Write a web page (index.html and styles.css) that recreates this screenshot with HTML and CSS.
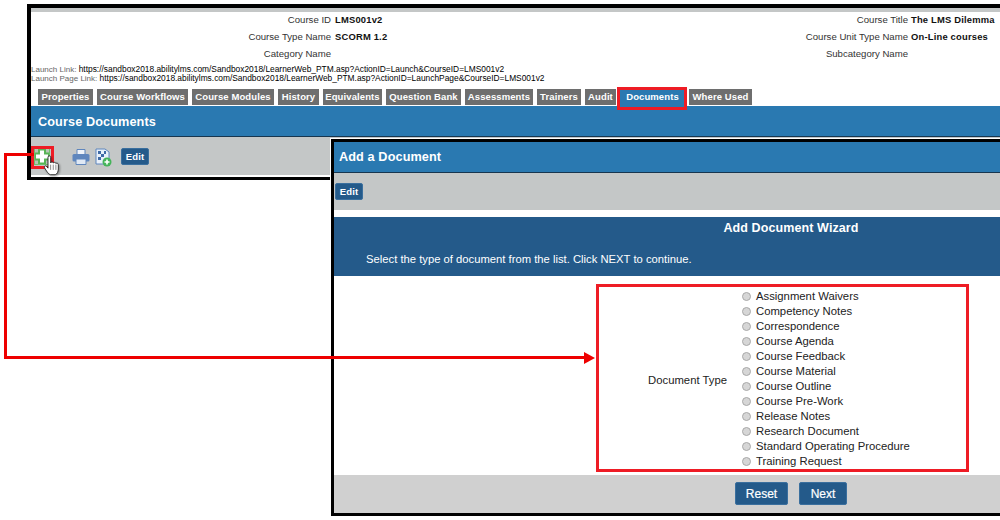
FILE: index.html
```html
<!DOCTYPE html>
<html lang="en">
<head>
<meta charset="utf-8">
<title>Course Documents</title>
<link rel="stylesheet" href="styles.css">
</head>
<body>
<div class="canvas">
  <section class="shot course">
    <div class="strip"></div>
    <div class="meta">
      <div class="meta-row"><div class="pair p1"><span>Course ID</span><b>LMS001v2</b></div><div class="pair p2"><span>Course Title</span><b>The LMS Dilemma</b></div></div>
      <div class="meta-row"><div class="pair p1"><span>Course Type Name</span><b>SCORM 1.2</b></div><div class="pair p2"><span>Course Unit Type Name</span><b>On-Line courses</b></div></div>
      <div class="meta-row"><div class="pair p1"><span>Category Name</span></div><div class="pair p2"><span>Subcategory Name</span></div></div>
    </div>
    <div class="links">
      <div><span>Launch Link:</span> https://sandbox2018.abilitylms.com/Sandbox2018/LearnerWeb_PTM.asp?ActionID=Launch&amp;CourseID=LMS001v2</div>
      <div><span>Launch Page Link:</span> https://sandbox2018.abilitylms.com/Sandbox2018/LearnerWeb_PTM.asp?ActionID=LaunchPage&amp;CourseID=LMS001v2</div>
    </div>
    <nav class="tabs">
      <a class="tab">Properties</a><a class="tab">Course Workflows</a><a class="tab">Course Modules</a><a class="tab">History</a><a class="tab">Equivalents</a><a class="tab">Question Bank</a><a class="tab">Assessments</a><a class="tab">Trainers</a><a class="tab">Audit</a><a class="tab active">Documents</a><a class="tab">Where Used</a>
    </nav>
    <h1 class="bar course-bar">Course Documents</h1>
    <div class="toolbar">
      <svg class="ico add" width="16" height="17" viewBox="0 0 16 17"><rect x=".5" y=".5" width="15" height="16" fill="#b7c4b5" stroke="#6fbf6a"/><path d="M8 1v15M1 8.500h14" stroke="#58b456" stroke-width="8"/><path d="M8 2.500v12M2 8.500h12" stroke="#fff" stroke-width="4"/></svg>
      <svg class="ico print" width="18" height="18" viewBox="0 0 18 18"><path d="M5 1.500h8v5H5z" fill="#eef3fa" stroke="#5f86bd"/><rect x=".5" y="6" width="17" height="7.500" rx="1.500" fill="#5f86bd"/><path d="M4 11h10v5.500H4z" fill="#dfe8f4" stroke="#5f86bd"/></svg>
      <svg class="ico doc" width="17" height="19" viewBox="0 0 17 19"><path d="M1 1h9l4 3v12H1z" fill="#e9f0f9" stroke="#5f86bd"/><path d="M3 3h3v3H3zM6 6h3v3H6zM3 9h3v3H3zM9 3h2v3H9z" fill="#3f6aa6"/><circle cx="12" cy="14" r="4.500" fill="#45b45a"/><path d="M12 11.500v5M9.500 14h5" stroke="#fff" stroke-width="1.600"/></svg>
      <button class="btn small">Edit</button>
    </div>
  </section>

  <section class="shot wizard">
    <h2 class="bar wizard-bar">Add a Document</h2>
    <div class="edit-row"><button class="btn small">Edit</button></div>
    <div class="wizard-head">
      <div class="wizard-title">Add Document Wizard</div>
      <p class="wizard-hint">Select the type of document from the list. Click NEXT to continue.</p>
    </div>
    <div class="form">
      <div class="field-label">Document Type</div>
      <ul class="options">
        <li><i></i>Assignment Waivers</li>
        <li><i></i>Competency Notes</li>
        <li><i></i>Correspondence</li>
        <li><i></i>Course Agenda</li>
        <li><i></i>Course Feedback</li>
        <li><i></i>Course Material</li>
        <li><i></i>Course Outline</li>
        <li><i></i>Course Pre-Work</li>
        <li><i></i>Release Notes</li>
        <li><i></i>Research Document</li>
        <li><i></i>Standard Operating Procedure</li>
        <li><i></i>Training Request</li>
      </ul>
    </div>
    <div class="actions"><button class="btn big reset">Reset</button><button class="btn big next">Next</button></div>
  </section>

  <div class="mark mark-add"></div>
  <div class="mark mark-tab"></div>
  <div class="mark mark-form"></div>
  <div class="line line-a"></div>
  <div class="line line-b"></div>
  <div class="line line-c"></div>
  <div class="arrowhead"></div>
  <svg class="cursor" width="17" height="21" viewBox="0 0 18 24"><path d="M5 2.500c0-2 3-2 3 0V9c.500-1.500 3-1.500 3 .200.500-1.200 3-1 3 .500.800-.800 2.800-.300 2.800 1.300V16c0 3-1.500 6-3.500 6.500H7.500C5.500 22 3 18 1 14.500c-.800-1.500 1-3 2.300-1.500L5 15z" fill="#fff" stroke="#222" stroke-width="1"/><path d="M8 11v6M11 11v6M14 11v6" stroke="#444" stroke-width=".700"/></svg>
</div>
</body>
</html>
```

FILE: styles.css
```css
* { box-sizing: border-box; }
html, body { margin: 0; padding: 0; background: #fff; }
body { font-family: "Liberation Sans", Arial, sans-serif; color: #222; }
.canvas { position: relative; width: 1000px; height: 520px; overflow: hidden; }

.shot { position: absolute; background: #fff; border: solid #000; border-right: 0; }
.course { left: 27px; top: 4px; width: 973px; height: 176px; border-width: 4px 0 3px 4px; }
.strip { height: 4px; background: #c4c7c7; }

.meta { height: 50px; }
.meta-row { display: flex; height: 17px; line-height: 16px; }
.pair { position: relative; white-space: nowrap; }
.pair span { display: block; text-align: right; font-size: 9.600px; color: #333; }
.pair b { position: absolute; top: 0; font-size: 9.400px; color: #111; letter-spacing: .2px; }
.p1 { width: 331px; }
.p1 span { width: 300px; }
.p1 b { left: 304px; }
.p2 { width: 590px; }
.p2 span { width: 546px; }
.p2 b { left: 549px; }

.links { margin-top: 3px; height: 17px; font-size: 8.400px; line-height: 9px; color: #000; white-space: nowrap; }
.links span { color: #666; font-size: 8px; }

.tabs { display: grid; grid-template-columns: 55px 91px 82px 41px 59px 75px 68px 44px 31px 65px 63px; column-gap: 4px; justify-content: start; padding: 7px 0 0 7px; height: 24px; align-items: start; }
.tab { display: block; height: 16px; line-height: 16px; text-align: center; background: #6e6e6e; color: #fff; font-size: 9.500px; font-weight: 700; white-space: nowrap; letter-spacing: .1px; }
.tab.active { background: #2a79b1; height: 17px; }

.bar { margin: 0; color: #fff; font-weight: 700; background: #2a79b1; }
.course-bar { height: 31px; line-height: 31px; padding: 1px 0 0 7px; font-size: 12.700px; border-bottom: 1px solid #17364f; letter-spacing: .1px; }
.toolbar { height: 39px; background: #c4c7c7; display: flex; align-items: flex-start; padding: 11px 0 0 3px; border-bottom: 1px solid #fff; }
.ico { display: block; flex: none; }
.print { margin: 0 0 0 22px; }
.doc { margin: 0 0 0 5px; }
.toolbar .btn { margin: 0 0 0 9px; }
.cursor { position: absolute; left: 43px; top: 155px; filter: drop-shadow(1px 1px 1px rgba(0,0,0,.4)); }

.btn { border: 1px solid #3a6f9e; border-radius: 2px; background: #245a8a; color: #fff; font-family: inherit; font-weight: 700; padding: 0; display: block; }
.small { width: 28px; height: 17px; font-size: 9.500px; line-height: 14px; letter-spacing: .2px; }
.big { height: 23px; font-size: 12px; -webkit-text-stroke: .2px #fff; font-weight: 400; }
.reset { width: 53px; }
.next { width: 48px; }

.wizard { left: 331px; top: 139px; width: 669px; height: 377px; border-width: 3px 0 3px 3px; outline: 1px solid #fff; }
.wizard-bar { height: 31px; line-height: 30px; padding-left: 5px; font-size: 12.700px; border-bottom: 1px solid #17364f; letter-spacing: .1px; }
.edit-row { height: 37px; background: #c4c7c7; padding: 10px 0 0 1px; }
.wizard-head { margin-top: 7px; height: 59px; background: #245a8a; color: #fff; position: relative; }
.wizard-title { text-align: center; font-size: 12.500px; font-weight: 700; line-height: 14px; padding-top: 4px; letter-spacing: .1px; margin-left: 247px; width: 420px; }
.wizard-hint { margin: 0; position: absolute; left: 32px; top: 36px; font-size: 11.250px; line-height: 13px; white-space: nowrap; }

.form { height: 199px; display: flex; background: #fff; padding-top: 13px; }
.field-label { width: 393px; padding: 84px 0 0 0; text-align: right; font-size: 11.300px; line-height: 14px; color: #222; }
.options { list-style: none; margin: 0 0 0 15px; padding: 0; font-size: 11.300px; color: #222; }
.options li { display: flex; align-items: center; height: 15px; line-height: 15px; white-space: nowrap; }
.options i { width: 9px; height: 9px; border-radius: 50%; background: #d6d6d6; border: 1px solid #a9a9a9; margin-right: 5px; flex: none; }

.actions { height: 38px; background: #d0d0d0; display: flex; gap: 11px; padding: 7px 0 0 401px; }

.mark { position: absolute; border: 3px solid #ee1c25; }
.mark-add { left: 31px; top: 146px; width: 23px; height: 23px; }
.mark-tab { left: 617px; top: 87px; width: 70px; height: 23px; }
.mark-form { left: 596px; top: 284px; width: 373px; height: 188px; }
.line { position: absolute; background: #ee0000; }
.line-a { left: 4px; top: 153px; width: 30px; height: 3px; }
.line-b { left: 4px; top: 153px; width: 3px; height: 206px; }
.line-c { left: 4px; top: 356px; width: 581px; height: 3px; }
.arrowhead { position: absolute; left: 584px; top: 352px; width: 0; height: 0; border-style: solid; border-width: 6px 0 6px 11px; border-color: transparent transparent transparent #ee0000; }
```
